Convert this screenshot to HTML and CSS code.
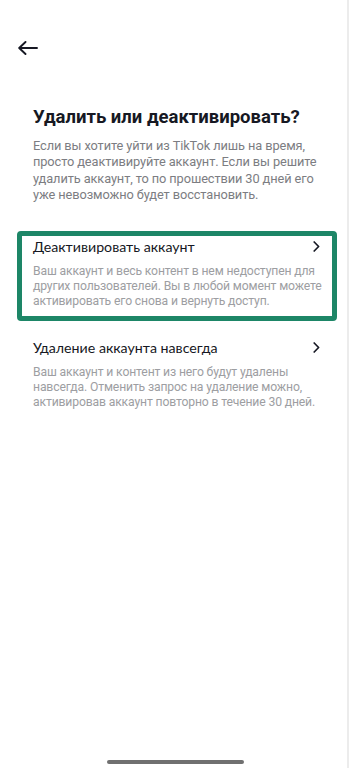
FILE: index.html
```html
<!DOCTYPE html>
<html lang="ru">
<head>
    <meta charset="UTF-8">
    <meta name="viewport" content="width=device-width, initial-scale=1.0">
    <title>Удалить или деактивировать?</title>
    <link rel="stylesheet" href="styles.css">
</head>
<body>
    <div class="page">
        <header class="topbar">
            <a href="#" class="back">
                <svg width="21" height="14" viewBox="0 0 21 14">
                    <path d="M20 7H2.5 M8.5 1 L2.2 7 L8.5 13" fill="none" stroke="#161823" stroke-width="1.9" stroke-linecap="round" stroke-linejoin="round"/>
                </svg>
            </a>
        </header>

        <section class="content">
            <h1>Удалить или деактивировать?</h1>
            <p class="intro">Если вы хотите уйти из TikTok лишь на время, просто деактивируйте аккаунт. Если вы решите удалить аккаунт, то по прошествии 30 дней его уже невозможно будет восстановить.</p>

            <a href="#" class="option selected">
                <div class="option-head">
                    <span>Деактивировать аккаунт</span>
                    <svg width="7" height="11" viewBox="0 0 7 11"><path d="M1.2 1 L5.6 5.5 L1.2 10" fill="none" stroke="#161823" stroke-width="1.7" stroke-linecap="round" stroke-linejoin="round"/></svg>
                </div>
                <p>Ваш аккаунт и весь контент в нем недоступен для других пользователей. Вы в любой момент можете активировать его снова и вернуть доступ.</p>
            </a>

            <a href="#" class="option">
                <div class="option-head">
                    <span>Удаление аккаунта навсегда</span>
                    <svg width="7" height="11" viewBox="0 0 7 11"><path d="M1.2 1 L5.6 5.5 L1.2 10" fill="none" stroke="#161823" stroke-width="1.7" stroke-linecap="round" stroke-linejoin="round"/></svg>
                </div>
                <p>Ваш аккаунт и контент из него будут удалены навсегда. Отменить запрос на удаление можно, активировав аккаунт повторно в течение 30 дней.</p>
            </a>
        </section>

        <div class="home-bar"></div>
    </div>
</body>
</html>
```

FILE: styles.css
```css
/* экран удаления / деактивации аккаунта */
body {
    margin: 0;
    background-color: #fff;
    font-family: Roboto, "Noto Sans", Arial, sans-serif;
    color: #161823;
}

.page {
    width: 347px;
    height: 768px;
    border-right: 2px solid #ececec;
    display: flex;
    flex-direction: column;
}

.topbar {
    padding: 40px 0 0 17px;
    height: 24px;
}

.back {
    display: block;
    width: 21px;
    height: 14px;
}

.content {
    padding: 41px 10px 0 17px;
}

h1 {
    margin: 0 16px;
    font-size: 18.5px;
    line-height: 24px;
    font-weight: 700;
}

.intro {
    margin: 9px 6px 0 16px;
    font-size: 12.8px;
    line-height: 16.4px;
    letter-spacing: -0.1px;
    color: #7c7d82;
}

.option {
    display: block;
    margin-top: 27px;
    padding: 2px 12px 7px 11px;
    border: 5px solid transparent;
    border-radius: 4px;
    text-decoration: none;
    color: inherit;
}

.option + .option {
    margin-top: 11px;
}

.option.selected {
    border-color: #1d8667;
}

.option-head {
    display: flex;
    justify-content: space-between;
    align-items: center;
    height: 18px;
    font-family: Lato, Roboto, sans-serif;
    font-size: 14.2px;
    color: #161823;
}

.option p {
    margin: 8px -6px 0 0;
    font-size: 12.2px;
    line-height: 15px;
    letter-spacing: -0.15px;
    color: #9d9ea2;
}

.home-bar {
    margin: auto auto 4px 107px;
    width: 137px;
    height: 4px;
    border-radius: 2px;
    background-color: #707070;
}
```
